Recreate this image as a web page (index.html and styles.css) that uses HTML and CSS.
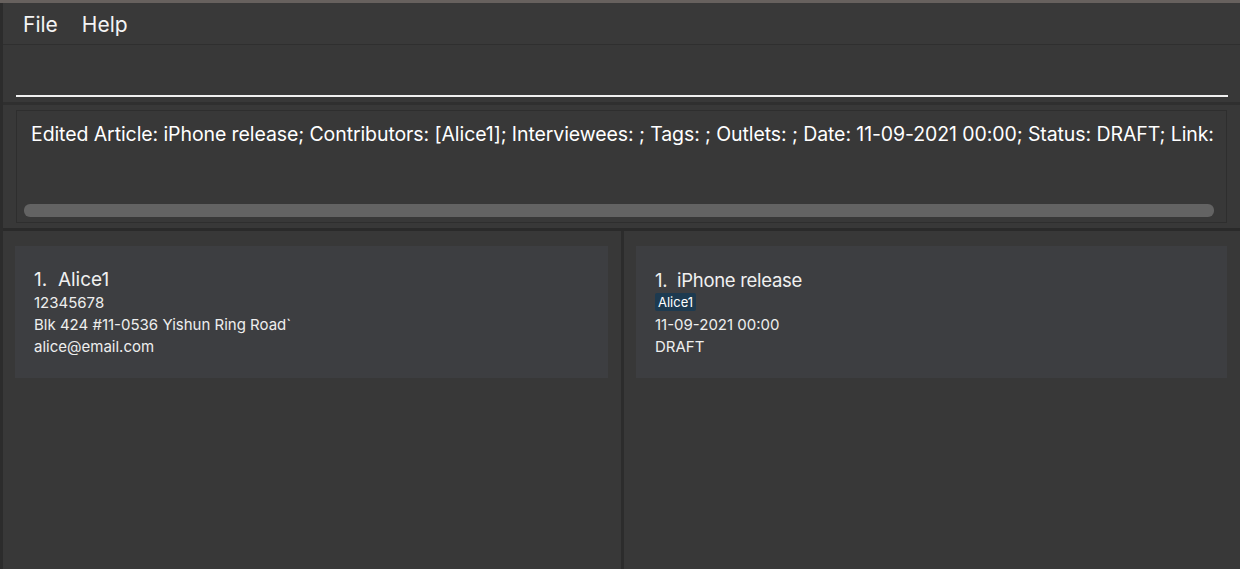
FILE: index.html
```html
<!DOCTYPE html>
<html>
<head>
<meta charset="utf-8">
<link rel="stylesheet" href="styles.css">
</head>
<body>
<div class="topline"></div>
<div class="window">
  <div class="menubar">
    <span class="menu-item">File</span>
    <span class="menu-item">Help</span>
  </div>
  <div class="command-area">
    <div class="command-field"></div>
  </div>
  <div class="result-area">
    <div class="result-box">
      <div class="result-text">Edited Article: iPhone release; Contributors: [Alice1]; Interviewees: ; Tags: ; Outlets: ; Date: 11-09-2021 00:00; Status: DRAFT; Link:</div>
      <div class="scrollbar"><div class="thumb"></div></div>
    </div>
  </div>
  <div class="panes">
    <div class="pane">
      <div class="card">
        <div class="card-title">1.&nbsp;&nbsp;Alice1</div>
        <div class="card-line">12345678</div>
        <div class="card-line">Blk 424 #11-0536 Yishun Ring Road`</div>
        <div class="card-line">alice@email.com</div>
      </div>
    </div>
    <div class="pane-divider"></div>
    <div class="pane right">
      <div class="card">
        <div class="card-title">1.&nbsp;&nbsp;iPhone release</div>
        <div class="tags"><span class="tag">Alice1</span></div>
        <div class="card-line">11-09-2021 00:00</div>
        <div class="card-line">DRAFT</div>
      </div>
    </div>
  </div>
</div>
</body>
</html>
```
FILE: styles.css
```css
* { box-sizing: border-box; }
html, body {
  margin: 0;
  padding: 0;
  width: 1240px;
  height: 569px;
  overflow: hidden;
  background: #383838;
  font-family: Inter, "Open Sans", sans-serif;
  color: #ffffff;
}
.topline {
  height: 3px;
  background: #67615e;
}
.window {
  height: 566px;
  border-left: 3px solid #2c2c2c;
  display: flex;
  flex-direction: column;
}
.menubar {
  height: 42px;
  display: flex;
  align-items: center;
  padding-left: 20px;
  padding-top: 2px;
  gap: 24px;
  border-bottom: 1px solid #2f2f2f;
  background: #393939;
}
.menu-item {
  font-size: 21px;
  color: #f4f4f4;
}
.command-area {
  height: 60px;
  padding: 0 12px 0 13px;
  display: flex;
  align-items: flex-end;
  border-bottom: 3px solid #2f2f2f;
}
.command-field {
  width: 100%;
  height: 2px;
  background: #f0f0f0;
  margin-bottom: 5px;
}
.result-area {
  height: 126px;
  padding: 5px 13px 6px 13px;
  border-bottom: 3px solid #2a2a2a;
}
.result-box {
  height: 113px;
  border: 1px solid #2e2e2e;
  background: #383838;
  padding: 11px 12px 0 7px;
  display: flex;
  flex-direction: column;
}
.result-text {
  font-size: 19.5px;
  white-space: nowrap;
  color: #ffffff;
  letter-spacing: -0.09px;
  padding-left: 7px;
}
.scrollbar {
  margin-top: auto;
  margin-bottom: 5px;
}
.thumb {
  height: 13px;
  border-radius: 6px;
  background: #636363;
}
.panes {
  flex: 1;
  display: flex;
}
.pane {
  width: 618px;
  padding: 15px 13px 0 12px;
}
.pane.right {
  flex: 1;
  padding: 15px 13px 0 12px;
}
.pane-divider {
  width: 3px;
  background: #2c2c2c;
}
.card {
  height: 132px;
  background: #3d3e41;
  padding: 22px 19px 0 19px;
}
.card-title {
  font-size: 19px;
  color: #f0f0f0;
  line-height: 24px;
}
.pane.right .card-title {
  font-size: 18.5px;
  letter-spacing: -0.3px;
  margin-bottom: 1px;
}
.card-line {
  font-size: 15px;
  color: #eeeeee;
  line-height: 22px;
}
.tags {
  display: flex;
  margin: 0 0 3px 0;
}
.tag {
  background: #1d3a50;
  color: #ffffff;
  font-size: 13px;
  padding: 1px 3px;
  border-radius: 2px;
  line-height: 16px;
}
```
